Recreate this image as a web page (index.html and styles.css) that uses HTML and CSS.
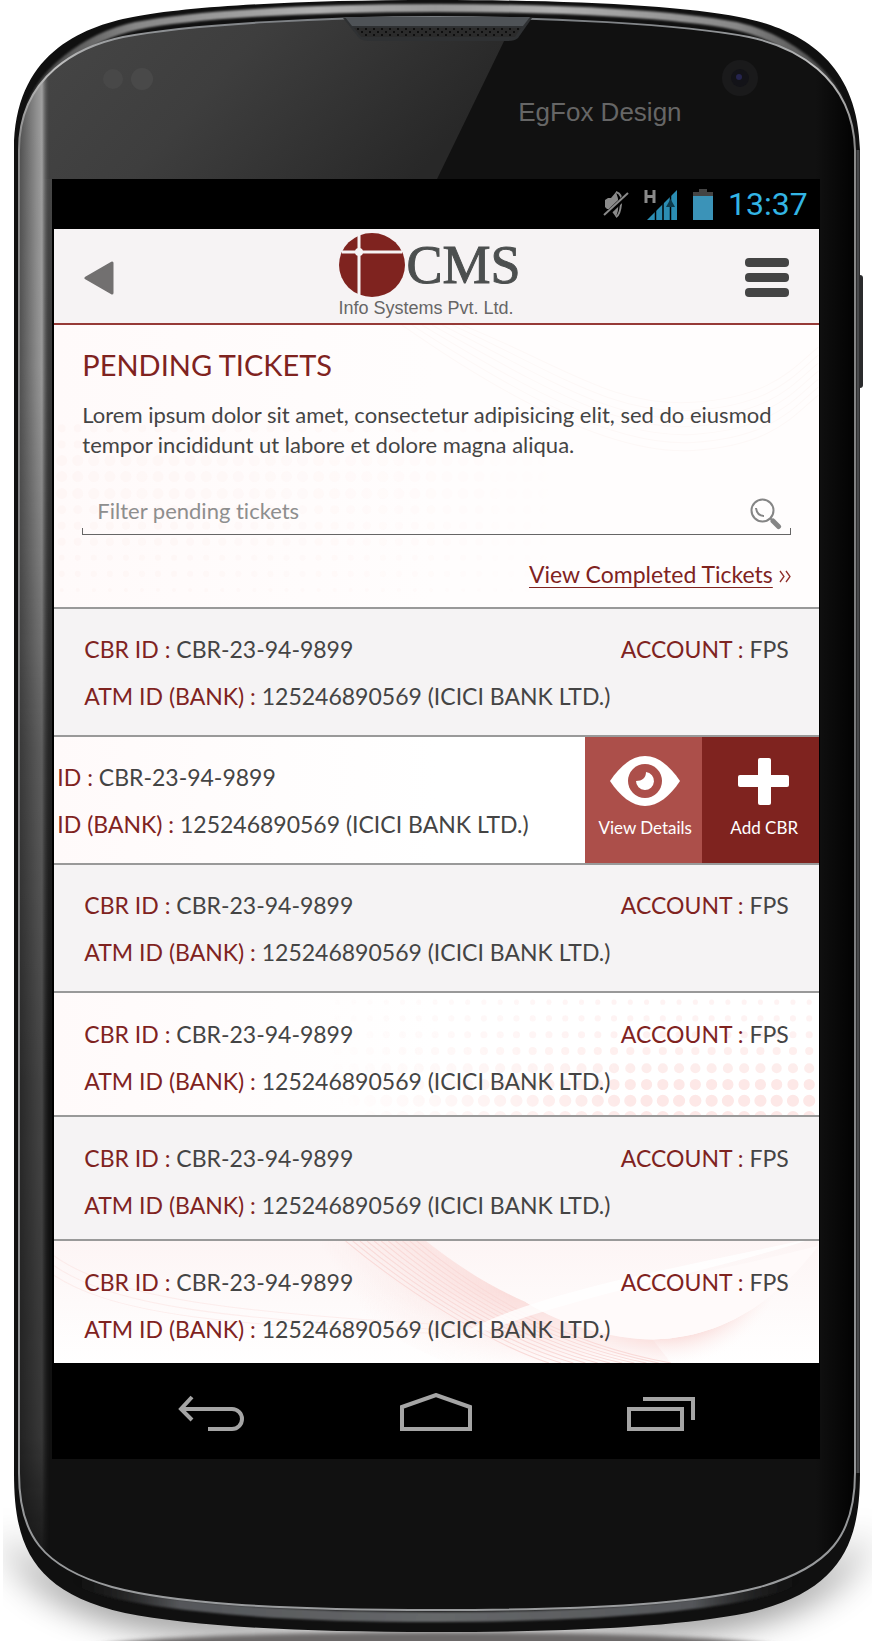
FILE: index.html
```html
<!DOCTYPE html>
<html lang="en">
<head>
<meta charset="utf-8">
<meta name="viewport" content="width=device-width, initial-scale=1">
<title>Pending Tickets</title>
<link rel="stylesheet" href="styles.css">
</head>
<body>
<div class="device">
  <svg class="device-shell" viewBox="0 0 872 1652" preserveAspectRatio="none" aria-hidden="true">
    <defs>
      <linearGradient id="glare" x1="0" y1="0" x2="1" y2="0.3">
        <stop offset="0" stop-color="#484848"/>
        <stop offset="0.5" stop-color="#3e3e3e"/>
        <stop offset="1" stop-color="#282828"/>
      </linearGradient>
      <linearGradient id="glareTail" x1="0" y1="0" x2="0" y2="1">
        <stop offset="0" stop-color="#464646"/>
        <stop offset="1" stop-color="#464646" stop-opacity="0"/>
      </linearGradient>
      <linearGradient id="side" x1="0" y1="0" x2="1" y2="0">
        <stop offset="0" stop-color="#4c4c4c"/>
        <stop offset="0.55" stop-color="#8c8c8c"/>
        <stop offset="0.75" stop-color="#a0a0a0"/>
        <stop offset="1" stop-color="#3c3c3c" stop-opacity="0"/>
      </linearGradient>
      <linearGradient id="sideFade" x1="0" y1="0" x2="0" y2="1">
        <stop offset="0" stop-color="#fff"/>
        <stop offset="0.2" stop-color="#eee"/>
        <stop offset="0.45" stop-color="#777"/>
        <stop offset="0.9" stop-color="#444"/>
        <stop offset="1" stop-color="#000"/>
      </linearGradient>
      <mask id="sideMask" maskUnits="userSpaceOnUse" x="0" y="0" width="80" height="1652"><rect x="0" y="60" width="80" height="1530" fill="url(#sideFade)"/></mask>
      <linearGradient id="right" x1="0" y1="0" x2="1" y2="0">
        <stop offset="0" stop-color="#000" stop-opacity="0"/>
        <stop offset="1" stop-color="#000" stop-opacity="0.9"/>
      </linearGradient>
      <linearGradient id="edge" gradientUnits="userSpaceOnUse" x1="0" y1="17" x2="0" y2="1610">
        <stop offset="0" stop-color="#787c80"/>
        <stop offset="0.03" stop-color="#c0c0c0"/>
        <stop offset="0.08" stop-color="#8a8a8a"/>
        <stop offset="0.5" stop-color="#77787a"/>
        <stop offset="1" stop-color="#9a9c9e"/>
      </linearGradient>
      <linearGradient id="topBand" gradientUnits="userSpaceOnUse" x1="40" y1="0" x2="832" y2="0">
        <stop offset="0" stop-color="#444"/>
        <stop offset="0.12" stop-color="#888"/>
        <stop offset="0.35" stop-color="#b0b0b0"/>
        <stop offset="0.5" stop-color="#9a9a9a"/>
        <stop offset="0.65" stop-color="#b0b0b0"/>
        <stop offset="0.88" stop-color="#888"/>
        <stop offset="1" stop-color="#444"/>
      </linearGradient>
      <linearGradient id="lowBand" gradientUnits="userSpaceOnUse" x1="70" y1="0" x2="802" y2="0">
        <stop offset="0" stop-color="#222" stop-opacity="0"/>
        <stop offset="0.15" stop-color="#55575a"/>
        <stop offset="0.5" stop-color="#66686a"/>
        <stop offset="0.85" stop-color="#55575a"/>
        <stop offset="1" stop-color="#222" stop-opacity="0"/>
      </linearGradient>
      <filter id="soft" x="-20%" y="-60%" width="140%" height="220%"><feGaussianBlur stdDeviation="18"/></filter>
      <filter id="softer" x="-20%" y="-20%" width="140%" height="140%"><feGaussianBlur stdDeviation="2"/></filter>
      <filter id="bandSoft" x="-5%" y="-50%" width="110%" height="200%"><feGaussianBlur stdDeviation="1"/></filter>
      <clipPath id="floor"><rect x="3" y="1450" width="869" height="191"/></clipPath>
      <clipPath id="glassClip"><path d="M436 17 C330 17 190 24 123 37 C80 46 19 75 19 150 V1473 C19 1535 42 1567 112 1587 C172 1603 272 1610 436 1610 C600 1610 700 1603 760 1587 C830 1567 855 1535 855 1473 V150 C853 75 792 46 749 37 C682 24 542 17 436 17Z"/></clipPath>
      <clipPath id="bodyClip"><path d="M436 0 C300 0 190 6 133 17 C80 27 14 55 14 150 V1473 C14 1545 32 1592 125 1613 C192 1626 292 1632 436 1632 C580 1632 680 1626 747 1613 C840 1592 860 1545 860 1473 V150 C858 55 792 27 739 17 C682 6 572 0 436 0Z"/></clipPath>
      <pattern id="grille" width="8" height="6" patternUnits="userSpaceOnUse"><rect width="8" height="6" fill="#2b2b2b"/><circle cx="2" cy="2" r="1" fill="#050505"/><circle cx="6" cy="5" r="1" fill="#050505"/></pattern>
    </defs>
    <g clip-path="url(#floor)">
      <path d="M0 1530 C40 1590 150 1610 436 1620 C722 1610 832 1590 872 1530 C850 1590 780 1625 640 1632 H232 C92 1625 22 1590 0 1530Z" fill="#000" opacity="0.600" filter="url(#soft)"/>
      <ellipse cx="436" cy="1650" rx="350" ry="18" fill="#6c6969" filter="url(#softer)"/>
    </g>
    <rect x="856" y="275" width="7" height="113" rx="3" fill="#2a2b2d"/>
    <g clip-path="url(#bodyClip)">
      <rect width="872" height="1652" fill="#101010"/>
      <path d="M28 120 C34 72 90 36 136 26 C190 15 300 8 436 8 C572 8 682 15 736 26 C782 36 838 72 844 120" fill="none" stroke="url(#topBand)" stroke-width="8" filter="url(#bandSoft)"/>
      <path d="M70 1577 C110 1602 250 1617 436 1617 C622 1617 762 1602 802 1577" fill="none" stroke="url(#lowBand)" stroke-width="10" filter="url(#bandSoft)"/>
      <path d="M858 150 V1473" stroke="#4a4b4d" stroke-width="3"/>
    </g>
    <g clip-path="url(#glassClip)">
      <rect width="872" height="1652" fill="#111"/>
      <path d="M0 0 H524 L437 179 H0Z" fill="url(#glare)"/>
      <rect x="0" y="179" width="60" height="900" fill="url(#glareTail)"/>
      <rect x="18" y="60" width="32" height="1530" fill="url(#side)" mask="url(#sideMask)"/>
      <rect x="815" y="0" width="40" height="1652" fill="url(#right)"/>
    </g>
    <path d="M436 17 C330 17 190 24 123 37 C80 46 19 75 19 150 V1473 C19 1535 42 1567 112 1587 C172 1603 272 1610 436 1610 C600 1610 700 1603 760 1587 C830 1567 855 1535 855 1473 V150 C853 75 792 46 749 37 C682 24 542 17 436 17Z" fill="none" stroke="url(#edge)" stroke-width="2"/>
    <path d="M343 18 H532 L518 38 Q515 41 508 41 H370 Q362 41 359 38Z" fill="#2f3133"/>
    <path d="M345 17 H530 L523 26 H352Z" fill="#4f5357"/>
    <path d="M354 28 H521 L515 37 H361Z" fill="url(#grille)"/>
    <circle cx="113" cy="79" r="10" fill="#484848"/>
    <circle cx="142" cy="79" r="11" fill="#494949"/>
    <circle cx="740" cy="78" r="18" fill="#1a1a1b"/>
    <circle cx="740" cy="78" r="9" fill="#131318"/>
    <circle cx="739" cy="77" r="3" fill="#25244e"/>
  </svg>

  <p class="maker">EgFox Design</p>

  <div class="screen">
    <div class="status">
      <svg class="status-icon" width="26" height="28" viewBox="0 0 26 28" role="img" aria-label="Muted">
        <path d="M2 10 L5 8 H8 L13 2 Q18 14 13 27 L7 19 H4 L2 17Z" fill="#8a8a8a"/>
        <path d="M13 2 Q20 4 18 14 Q17 25 13 27" fill="none" stroke="#8a8a8a" stroke-width="2"/>
        <path d="M2 26 L25 4" stroke="#000" stroke-width="5"/>
        <path d="M1 25 L25 3" stroke="#8a8a8a" stroke-width="2"/>
      </svg>
      <svg class="status-icon" width="34" height="31" viewBox="0 0 34 31" role="img" aria-label="Signal, H network">
        <path d="M2 1 V14 M10 1 V14 M2 7.500 H10" stroke="#8a8a8a" stroke-width="3" fill="none"/>
        <path d="M3 31 L33 1 V31Z" fill="#2b8db3"/>
        <path d="M11.500 20 V31 M19 14 V31 M26.500 6 V31" stroke="#000" stroke-width="1.500"/>
        <path d="M26.500 10 L31 18 H22Z" fill="#0d3a4b"/>
      </svg>
      <svg class="status-icon" width="20" height="31" viewBox="0 0 20 31" role="img" aria-label="Battery">
        <path d="M0 3 H6 V0 H14 V3 H20 V7 H0Z" fill="#444"/>
        <path d="M0 7 H20 V31 H0Z" fill="#3b93b8"/>
      </svg>
      <time class="clock">13:37</time>
    </div>

    <main class="app">
      <header class="topbar">
        <button class="icon-button" type="button" aria-label="Back">
          <svg width="30" height="34" viewBox="0 0 30 34"><path d="M2 17 L28 2 V32Z" fill="#727070" stroke="#727070" stroke-width="3" stroke-linejoin="round"/></svg>
        </button>
        <div class="brand">
          <div class="brand-mark">
            <svg width="68" height="66" viewBox="0 0 68 66" aria-hidden="true">
              <ellipse cx="34" cy="33" rx="33" ry="32" fill="#7f231f"/>
              <path d="M21 3 V63 M4 20 H64" stroke="#f6f3f4" stroke-width="3"/>
              <circle cx="21" cy="20" r="4" fill="#f6f3f4"/>
            </svg>
            <span class="brand-name">CMS</span>
          </div>
          <span class="brand-sub">Info Systems Pvt. Ltd.</span>
        </div>
        <button class="icon-button" type="button" aria-label="Menu">
          <svg width="44" height="39" viewBox="0 0 44 39" fill="#444"><rect width="44" height="9" rx="4"/><rect y="15" width="44" height="9" rx="4"/><rect y="30" width="44" height="9" rx="4"/></svg>
        </button>
      </header>

      <section class="intro">
        <svg class="backdrop" viewBox="0 0 765 281" preserveAspectRatio="xMaxYMin slice" aria-hidden="true">
          <defs>
            <linearGradient id="fadeRight" x1="0" x2="1"><stop offset="0" stop-color="#fff"/><stop offset="1" stop-color="#000"/></linearGradient>
            <mask id="introMask" maskUnits="userSpaceOnUse" x="0" y="0" width="765" height="281"><rect width="520" height="281" fill="url(#fadeRight)"/></mask>
          </defs>
          <g class="dots dots-faint" mask="url(#introMask)">
            <path d="M11 103H500M11 119H500" stroke-width="8"/>
            <path d="M11 135H500M11 151H500M11 168H500" stroke-width="11"/>
            <path d="M11 184H500" stroke-width="9"/>
            <path d="M11 200H500M11 216H500" stroke-width="8"/>
            <path d="M11 232H500M11 248H500" stroke-width="6"/>
            <path d="M11 264H500" stroke-width="4"/>
          </g>
          <g class="strands strands-faint">
            <path d="M350 0 C450 70 560 130 640 125 S740 90 765 70"/>
            <path d="M360 0 C460 65 560 122 640 117 S740 82 765 62"/>
            <path d="M370 0 C470 60 560 114 640 109 S740 74 765 54"/>
            <path d="M380 0 C480 55 560 106 640 101 S740 66 765 46"/>
            <path d="M390 0 C490 50 560 98 640 93 S740 58 765 38"/>
            <path d="M400 0 C500 45 560 90 640 85 S740 50 765 30"/>
            <path d="M410 0 C510 40 560 82 640 77 S740 42 765 22"/>
          </g>
        </svg>
        <h1 class="title">PENDING TICKETS</h1>
        <p class="lead">Lorem ipsum dolor sit amet, consectetur adipisicing elit, sed do eiusmod tempor incididunt ut labore et dolore magna aliqua.</p>
        <form class="filter">
          <input class="filter-input" type="text" aria-label="Filter pending tickets" placeholder="Filter pending tickets">
          <button class="icon-button filter-submit" type="submit" aria-label="Search">
            <svg width="32" height="32" viewBox="0 0 32 32" fill="none" stroke="#858585">
              <circle cx="12.500" cy="12.500" r="11" stroke-width="2"/>
              <path d="M6 10 Q7 18 14 18" stroke-width="2"/>
              <path d="M20 20 L22.500 22.500" stroke-width="2"/>
              <path d="M23 23 L28.500 28.500" stroke-width="5" stroke-linecap="round"/>
            </svg>
          </button>
        </form>
        <p class="more"><a class="more-link" href="#completed">View Completed Tickets</a>
          <svg class="more-arrow" width="12" height="13" viewBox="0 0 12 13" fill="none" stroke="#8f2f2b" stroke-width="1.300" aria-hidden="true"><path d="M1 1 L5 6.500 L1 12 M7 1 L11 6.500 L7 12"/></svg>
        </p>
      </section>

      <ul class="tickets">
        <li class="ticket ticket-shaded">
          <div class="ticket-body">
            <p class="line"><span><b>CBR ID :</b> CBR-23-94-9899</span><span><b>ACCOUNT :</b> FPS</span></p>
            <p class="line"><span><b>ATM ID (BANK) :</b> 125246890569 (ICICI BANK LTD.)</span></p>
          </div>
        </li>
        <li class="ticket">
          <div class="ticket-body ticket-body-slid">
            <p class="line"><span><b>ID :</b> CBR-23-94-9899</span></p>
            <p class="line"><span><b>ID (BANK) :</b> 125246890569 (ICICI BANK LTD.)</span></p>
          </div>
          <div class="actions">
            <button class="action action-view" type="button">
              <svg width="70" height="50" viewBox="0 0 70 50" aria-hidden="true">
                <path d="M0 25 C10 10 22 0 35 0 S60 10 70 25 C60 40 48 50 35 50 S10 40 0 25Z" fill="#fff"/>
                <circle cx="35" cy="25" r="17" fill="#ac4f4a"/>
                <path d="M36 16 A9 9 0 1 1 26 25 C32 25 36 22 36 16Z" fill="#fff"/>
              </svg>
              View Details
            </button>
            <button class="action action-add" type="button">
              <svg width="52" height="50" viewBox="0 0 52 50" aria-hidden="true" fill="#fff"><rect x="20" y="2" width="13" height="47" rx="2"/><rect y="19" width="51" height="12" rx="2"/></svg>
              Add CBR
            </button>
          </div>
        </li>
        <li class="ticket ticket-shaded">
          <div class="ticket-body">
            <p class="line"><span><b>CBR ID :</b> CBR-23-94-9899</span><span><b>ACCOUNT :</b> FPS</span></p>
            <p class="line"><span><b>ATM ID (BANK) :</b> 125246890569 (ICICI BANK LTD.)</span></p>
          </div>
        </li>
        <li class="ticket ticket-compact">
          <svg class="backdrop" viewBox="0 0 765 120" preserveAspectRatio="xMaxYMin slice" aria-hidden="true">
            <defs>
              <linearGradient id="fadeLeft" gradientUnits="userSpaceOnUse" x1="290" y1="110" x2="560" y2="10"><stop offset="0" stop-color="#000"/><stop offset="1" stop-color="#fff"/></linearGradient>
              <mask id="dotMask" maskUnits="userSpaceOnUse" x="0" y="0" width="765" height="120"><rect width="765" height="120" fill="url(#fadeLeft)"/></mask>
            </defs>
            <g class="dots" mask="url(#dotMask)">
              <path d="M756 9H280" stroke-width="5" opacity="0.500"/>
              <path d="M756 25H280" stroke-width="6" opacity="0.500"/>
              <path d="M756 41H280" stroke-width="7" opacity="0.600"/>
              <path d="M756 57H280" stroke-width="8" opacity="0.700"/>
              <path d="M756 74H280" stroke-width="10" opacity="0.800"/>
              <path d="M756 90H280" stroke-width="11"/>
              <path d="M756 106H280" stroke-width="12"/>
              <path d="M756 122H280" stroke-width="12"/>
            </g>
          </svg>
          <div class="ticket-body">
            <p class="line"><span><b>CBR ID :</b> CBR-23-94-9899</span><span><b>ACCOUNT :</b> FPS</span></p>
            <p class="line"><span><b>ATM ID (BANK) :</b> 125246890569 (ICICI BANK LTD.)</span></p>
          </div>
        </li>
        <li class="ticket ticket-compact ticket-shaded">
          <div class="ticket-body">
            <p class="line"><span><b>CBR ID :</b> CBR-23-94-9899</span><span><b>ACCOUNT :</b> FPS</span></p>
            <p class="line"><span><b>ATM ID (BANK) :</b> 125246890569 (ICICI BANK LTD.)</span></p>
          </div>
        </li>
        <li class="ticket ticket-compact">
          <svg class="backdrop" viewBox="0 0 765 120" preserveAspectRatio="xMaxYMin slice" aria-hidden="true">
            <defs>
              <radialGradient id="bowl" gradientUnits="userSpaceOnUse" cx="615" cy="0" r="125"><stop offset="0.700" stop-color="#f8cfcc"/><stop offset="1" stop-color="#fff" stop-opacity="0"/></radialGradient>
              <linearGradient id="band" gradientUnits="userSpaceOnUse" x1="330" y1="90" x2="440" y2="20"><stop offset="0" stop-color="#fbe4e2" stop-opacity="0"/><stop offset="1" stop-color="#fadcda"/></linearGradient>
              <linearGradient id="bandFade" gradientUnits="userSpaceOnUse" x1="0" y1="50" x2="0" y2="120"><stop offset="0" stop-color="#fff"/><stop offset="1" stop-color="#222"/></linearGradient>
              <mask id="bandMask" maskUnits="userSpaceOnUse" x="0" y="0" width="765" height="120"><rect width="765" height="120" fill="url(#bandFade)"/></mask>
              <linearGradient id="wash" x1="0" y1="0" x2="0" y2="1"><stop offset="0" stop-color="#fdf5f5"/><stop offset="1" stop-color="#fff"/></linearGradient>
            </defs>
            <rect width="765" height="120" fill="url(#wash)"/>
            <path d="M477 60 C515 84 570 97 602 97 C680 95 730 50 765 5 V120 H480Z" fill="url(#bowl)"/>
            <g mask="url(#bandMask)">
              <path d="M180 0 H379 C410 24 440 44 477 60 C510 80 550 92 602 97 L620 120 H400 C330 90 250 40 180 0Z" fill="url(#band)"/>
            </g>
            <g class="strands">
              <path d="M370 0 C430 50 510 100 620 120M363 0 C423 50 503 100 608 120M356 0 C416 50 496 100 596 120M349 0 C409 50 489 100 584 120M342 0 C402 50 482 100 572 120M335 0 C395 50 475 100 560 120M328 0 C388 50 468 100 548 120M321 0 C381 50 461 100 536 120M314 0 C374 50 454 100 524 120M307 0 C367 50 447 100 512 120M300 0 C360 50 440 100 500 120"/>
              <path d="M0 4 C60 60 200 70 420 84M0 14 C60 68 200 78 420 88M0 24 C60 76 200 84 420 92" opacity="0.400"/>
            </g>
            <path d="M477 60 C540 50 600 45 765 5 C730 50 680 95 602 97 C560 96 515 84 477 60Z" fill="#fffafa"/>
            <path d="M420 88 C500 46 640 24 765 -4 C640 36 540 50 440 88Z" fill="#fff" opacity="0.800"/>
          </svg>
          <div class="ticket-body">
            <p class="line"><span><b>CBR ID :</b> CBR-23-94-9899</span><span><b>ACCOUNT :</b> FPS</span></p>
            <p class="line"><span><b>ATM ID (BANK) :</b> 125246890569 (ICICI BANK LTD.)</span></p>
          </div>
        </li>
      </ul>
    </main>

    <nav class="system-nav" aria-label="System">
      <button class="icon-button" type="button" aria-label="System back">
        <svg width="66" height="38" viewBox="0 0 66 38" fill="none" stroke="#a5a5a5" stroke-width="4"><path d="M14 4 L3 16 L14 27"/><path d="M4 16 H54 A10 10 0 0 1 54 36 H30"/></svg>
      </button>
      <button class="icon-button" type="button" aria-label="Home">
        <svg width="72" height="38" viewBox="0 0 72 38" fill="none" stroke="#a5a5a5" stroke-width="4"><path d="M2 14 L36 2 L70 14 V36 H2Z"/></svg>
      </button>
      <button class="icon-button" type="button" aria-label="Recent apps">
        <svg width="68" height="38" viewBox="0 0 68 38" fill="none" stroke="#a5a5a5" stroke-width="4"><path d="M2 16 H55 V36 H2Z"/><path d="M16 6 H66 V27"/></svg>
      </button>
    </nav>
  </div>
</div>
</body>
</html>
```
FILE: styles.css
```css
* {
  box-sizing: border-box;
}

body {
  margin: 0;
  background: #fff;
  color: #444;
  font-family: "Gill Sans", "Gill Sans MT", Lato, sans-serif;
  font-size: 22px;
  font-variant-ligatures: none;
}

h1, p, ul {
  margin: 0;
  padding: 0;
}

b {
  font-weight: 400;
  color: #7f231f;
}

.device {
  position: relative;
  padding: 94px 6% 193px;
}

.device-shell {
  position: absolute;
  inset: 0;
  width: 100%;
  height: 100%;
}

.maker {
  position: relative;
  padding-right: 18%;
  color: #666;
  font: 26px/36px "Liberation Sans", Arial, sans-serif;
  text-align: right;
}

.screen {
  position: relative;
  margin-top: 49px;
  background: #000;
}

.status {
  display: flex;
  align-items: center;
  justify-content: flex-end;
  gap: 15px;
  height: 50px;
  padding-right: 12px;
}

.clock {
  color: #33b5e5;
  font: 32px/50px Roboto, sans-serif;
}

.app {
  margin: 0 1px 0 2px;
  background: #fff;
}

.icon-button {
  display: flex;
  align-items: center;
  justify-content: center;
  padding: 0;
  border: 0;
  background: none;
  cursor: pointer;
}

.topbar {
  display: flex;
  align-items: center;
  justify-content: space-between;
  height: 96px;
  padding: 3px 30px 0;
  border-bottom: 2px solid #963a37;
  background: #f6f3f4;
}

.brand {
  display: flex;
  flex-direction: column;
  align-self: flex-start;
  color: #666;
}

.brand-mark {
  display: flex;
  align-items: center;
}

.brand-name {
  color: #4c4f4f;
  font: 54px/66px "Liberation Serif", "Times New Roman", serif;
  -webkit-text-stroke: 1px #4c4f4f;
}

.brand-sub {
  font: 18px/20px "Liberation Sans", Arial, sans-serif;
}

.intro {
  position: relative;
  padding: 22px 28px 18px;
  background: linear-gradient(90deg, #fffafa, #fffdfd 50%, #fffdfd);
}

.backdrop {
  position: absolute;
  inset: 0;
  width: 100%;
  height: 100%;
}

.dots {
  fill: none;
  stroke: #fde8e7;
  stroke-linecap: round;
  stroke-dasharray: 0 16;
}

.dots-faint {
  stroke: #fef6f5;
}

.strands {
  fill: none;
  stroke: #f9dad8;
  stroke-width: 1;
}

.strands-faint {
  stroke: #fdf8f7;
}

.title {
  position: relative;
  color: #7f231f;
  font-size: 29px;
  font-weight: 400;
  line-height: 36px;
}

.lead {
  position: relative;
  margin-top: 17px;
  line-height: 30px;
}

.filter {
  position: relative;
  display: flex;
  align-items: center;
  height: 49px;
  margin-top: 26px;
  padding: 0 9px 0 15px;
  border-bottom: 1px solid #666;
  background:
    linear-gradient(#666, #666) left bottom / 1px 6px no-repeat,
    linear-gradient(#666, #666) right bottom / 1px 6px no-repeat;
}

.filter-input {
  flex: 1;
  min-width: 0;
  padding: 0;
  border: 0;
  outline: 0;
  background: none;
  color: #444;
  font: inherit;
}

.filter-input::placeholder {
  color: #8e8e8e;
  opacity: 1;
}

.filter-submit {
  align-self: flex-end;
  padding-bottom: 4px;
}

.more {
  position: relative;
  margin-top: 24px;
  font-size: 23px;
  line-height: 30px;
  text-align: right;
}

.more-link {
  color: #7f231f;
  text-decoration-thickness: 1px;
  text-underline-offset: 4px;
}

.tickets {
  list-style: none;
}

.ticket {
  position: relative;
  display: flex;
  border-top: 2px solid #999;
  background: linear-gradient(90deg, #fffafa, #fff 50%);
}

.ticket-shaded {
  background: #f5f3f4;
}

.ticket-body {
  position: relative;
  flex: 1;
  min-width: 0;
  padding: 17px 30px 15px;
  font-size: 23px;
}

.ticket-compact .ticket-body {
  padding: 18px 30px 10px;
}

.ticket-body-slid {
  padding-left: 3px;
}

.line {
  display: flex;
  justify-content: space-between;
  line-height: 47px;
}

.actions {
  display: flex;
}

.action {
  display: flex;
  flex-direction: column;
  align-items: center;
  gap: 10px;
  width: 117px;
  padding: 19px 0 0 4px;
  border: 0;
  color: #fff;
  font: 17px/24px "Gill Sans", "Gill Sans MT", Lato, sans-serif;
  cursor: pointer;
}

.action-view {
  background: #ac4f4a;
}

.action-add {
  padding-left: 8px;
  background: #7f231f;
}

.system-nav {
  display: grid;
  grid-template-columns: repeat(3, 1fr);
  align-items: center;
  height: 96px;
  padding: 2px 6% 0;
}
```
